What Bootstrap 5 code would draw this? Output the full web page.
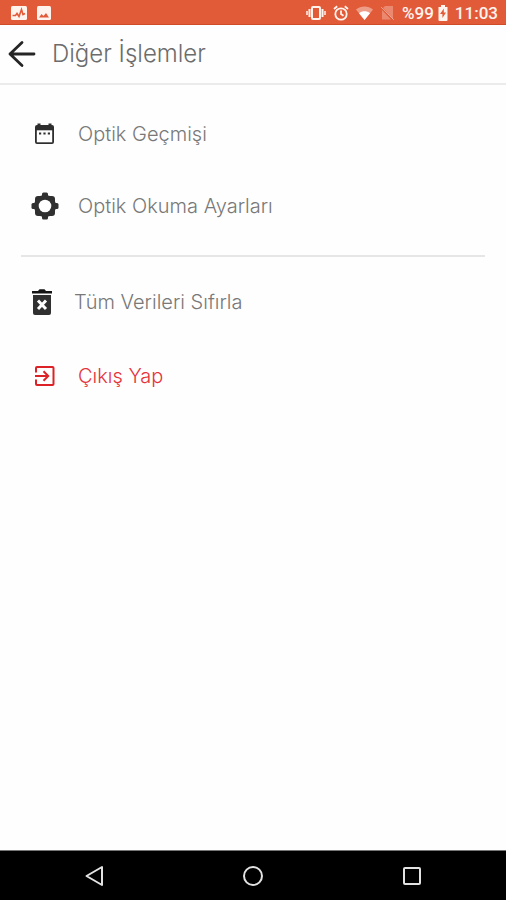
<!DOCTYPE html>
<html lang="tr">
<head>
<meta charset="utf-8">
<meta name="viewport" content="width=device-width, initial-scale=1">
<title>Diğer İşlemler</title>
<link href="https://cdn.jsdelivr.net/npm/bootstrap@5.3.0/dist/css/bootstrap.min.css" rel="stylesheet">
<style>
  body { font-family: Inter, "Open Sans", sans-serif; background: #fefefe; }
  svg { display: block; flex: none; }
  .status-bar { height: 25px; background: #e25b39; border-bottom: 1px solid #cf4c28; color: #fff3ee; padding: 2px 8px 0 10px; font: 500 17px/22px Roboto, sans-serif; }
  .status-icons { gap: 7px; }
  .app-bar { height: 60px; padding: 0 8px; border-bottom: 2px solid #ebebeb; }
  .app-title { font-size: 24px; line-height: 28px; font-weight: 300; color: #6c6c6c; }
  .menu-item { height: 72px; padding: 0 30px; gap: 18px; font-size: 20px; line-height: 24px; font-weight: 300; color: #787878; text-decoration: none; }
  .menu-item.danger { color: #e5333b; }
  .menu-main { padding-top: 13px; }
  .menu-line { margin: 13px 21px 9px; border-top: 2px solid #e6e6e6; opacity: 1; }
  .menu-more { gap: 2px; }
  .nav-keys { height: 50px; background: #000; border-top: 1px solid #777; padding: 0 14px; }
</style>
<script defer src="https://cdn.jsdelivr.net/npm/bootstrap@5.3.0/dist/js/bootstrap.bundle.min.js"></script>
</head>
<body class="d-flex flex-column min-vh-100">
<div class="status-bar d-flex align-items-center justify-content-between">
  <div class="d-flex gap-2">
    <svg width="18" height="16" viewBox="0 0 18 16"><rect x="1" y="1" width="16" height="14" rx="1.500" fill="#fff3ee"/><path d="M2.500 10.500h3l1.500-2 2 3 2.500-7 1.500 5 2-1" fill="none" stroke="#e25b39" stroke-width="1.600"/></svg>
    <svg width="16" height="16" viewBox="0 0 16 16"><rect x="1" y="1" width="14" height="14" rx="1.500" fill="#fff3ee"/><path d="M3 12.500l2.500-3.500 2 2 2.500-3 3 4.500z" fill="#e25b39"/></svg>
  </div>
  <div class="status-icons d-flex align-items-center">
    <svg width="20" height="16" viewBox="0 0 20 16" fill="none" stroke="#fff3ee"><rect x="6" y="2" width="8" height="12" rx="1" stroke-width="2"/><path d="M3.500 4v8M16.500 4v8" stroke-width="2"/><path d="M1 6v4M19 6v4" stroke-width="1.500"/></svg>
    <svg width="16" height="16" viewBox="0 0 16 16" fill="none" stroke="#fff3ee" stroke-width="1.800"><circle cx="8" cy="9" r="5.700"/><path d="M8 5.500V9l2.500 1.800M1 4l3.200-2.700M15 4l-3.200-2.700"/></svg>
    <svg width="17" height="14" viewBox="0 0 17 14"><path d="M0 3.500C5-.6 12-.6 17 3.500L8.500 14z" fill="#fff" opacity=".4"/><path d="M3 7.200c3.500-2.600 7.500-2.600 11 0L8.500 14z" fill="#fff"/></svg>
    <svg width="15" height="16" viewBox="0 0 15 16"><path d="M3 3l2-2h8v13z" fill="#fff" opacity=".28"/><path d="M2 5v9.500h9z" fill="#fff" opacity=".28"/><path d="M1 2l13 13" stroke="#fff" opacity=".4"/></svg>
    <div class="d-flex align-items-center gap-1">
      <span>%99</span>
      <svg width="10" height="16" viewBox="0 0 10 16"><path d="M3 0h4v2h2.500v13a1 1 0 0 1-1 1h-7a1 1 0 0 1-1-1V2H3z" fill="#fff3ee"/><path d="M5.800 3.500L2 9h2.400v4L8 7.500H5.800z" fill="#e25b39"/></svg>
    </div>
    <span>11:03</span>
  </div>
</div>
<header class="app-bar d-flex align-items-center">
  <button type="button" class="btn border-0 p-0 me-3" aria-label="Geri">
    <svg width="28" height="28" viewBox="0 0 28 28" fill="none" stroke="#252525" stroke-width="2.800" stroke-linecap="round" stroke-linejoin="round"><path d="M26 14H2M14 2.500L2 14l12 11.500"/></svg>
  </button>
  <h1 class="app-title m-0">Diğer İşlemler</h1>
</header>
<main class="flex-grow-1">
  <nav class="menu-main d-flex flex-column">
    <a href="#" class="menu-item d-flex align-items-center">
      <svg width="30" height="30" viewBox="0 0 30 30"><path d="M7.500 4.500h3V6h8V4.500h3V6H22a2 2 0 0 1 2 2v15a2 2 0 0 1-2 2H7a2 2 0 0 1-2-2V8a2 2 0 0 1 2-2h.5z" fill="#2e2e2e"/><path d="M6.800 11.300h15.400v12H6.800z" fill="#fefefe"/><path d="M9 14.500h2.200M13.400 14.500h2.200M17.800 14.500H20" stroke="#2e2e2e" stroke-width="2"/></svg>
      <span>Optik Geçmişi</span>
    </a>
    <a href="#" class="menu-item d-flex align-items-center">
      <svg width="30" height="30" viewBox="0 0 30 30"><g fill="#303030"><rect x="5" y="5" width="20" height="20" rx="3"/><rect x="12" y="1.500" width="6" height="27" rx="1.500"/><rect x="1.500" y="12" width="27" height="6" rx="1.500"/><circle cx="15" cy="15" r="11"/></g><circle cx="15" cy="15" r="6.300" fill="#fefefe"/></svg>
      <span>Optik Okuma Ayarları</span>
    </a>
  </nav>
  <hr class="menu-line">
  <nav class="menu-more d-flex flex-column">
    <a href="#" class="menu-item d-flex align-items-center">
      <svg width="26" height="30" viewBox="0 0 26 30"><path d="M2 4h6l1.500-1.800h5L16 4h6v2.500H2z" fill="#151515"/><path d="M3 8h18v18a2 2 0 0 1-2 2H5a2 2 0 0 1-2-2z" fill="#303030"/><path d="M8 13.500l8 8.500M16 13.500L8 22" stroke="#fefefe" stroke-width="3"/></svg>
      <span>Tüm Verileri Sıfırla</span>
    </a>
    <a href="#" class="menu-item danger d-flex align-items-center">
      <svg width="30" height="30" viewBox="0 0 30 30" fill="none" stroke="#dc2227" stroke-width="2"><path d="M6 11.500V7a1 1 0 0 1 1-1h15.500a1 1 0 0 1 1 1v16a1 1 0 0 1-1 1H7a1 1 0 0 1-1-1v-4.500M5 15h13M13.500 10.300l4.700 4.700-4.700 4.700"/></svg>
      <span>Çıkış Yap</span>
    </a>
  </nav>
</main>
<footer class="nav-keys d-flex align-items-center justify-content-around">
  <button type="button" class="btn border-0 p-0" aria-label="Geri tuşu"><svg width="22" height="22" viewBox="0 0 22 22" fill="none" stroke="#e2e2e2" stroke-width="2" stroke-linejoin="round"><path d="M19 2v18L3.500 11z"/></svg></button>
  <button type="button" class="btn border-0 p-0" aria-label="Ana ekran"><svg width="22" height="22" viewBox="0 0 22 22" fill="none" stroke="#e2e2e2" stroke-width="2"><circle cx="11" cy="11" r="9"/></svg></button>
  <button type="button" class="btn border-0 p-0" aria-label="Son uygulamalar"><svg width="22" height="22" viewBox="0 0 22 22" fill="none" stroke="#e2e2e2" stroke-width="2"><rect x="3" y="3" width="16" height="16" rx="1"/></svg></button>
</footer>
</body>
</html>
